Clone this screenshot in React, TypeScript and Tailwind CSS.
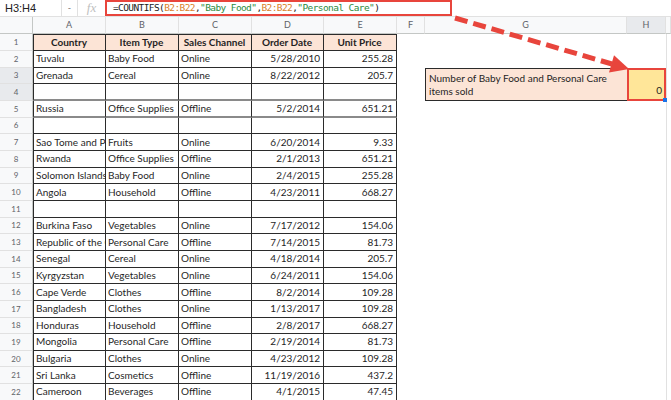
import React from "react";

type Row = [string, string, string, string, string] | null;

const ROWS: Row[] = [
  ["Country", "Item Type", "Sales Channel", "Order Date", "Unit Price"],
  ["Tuvalu", "Baby Food", "Online", "5/28/2010", "255.28"],
  ["Grenada", "Cereal", "Online", "8/22/2012", "205.7"],
  null,
  ["Russia", "Office Supplies", "Offline", "5/2/2014", "651.21"],
  null,
  ["Sao Tome and Principe", "Fruits", "Online", "6/20/2014", "9.33"],
  ["Rwanda", "Office Supplies", "Offline", "2/1/2013", "651.21"],
  ["Solomon Islands", "Baby Food", "Online", "2/4/2015", "255.28"],
  ["Angola", "Household", "Offline", "4/23/2011", "668.27"],
  null,
  ["Burkina Faso", "Vegetables", "Online", "7/17/2012", "154.06"],
  ["Republic of the Congo", "Personal Care", "Offline", "7/14/2015", "81.73"],
  ["Senegal", "Cereal", "Online", "4/18/2014", "205.7"],
  ["Kyrgyzstan", "Vegetables", "Online", "6/24/2011", "154.06"],
  ["Cape Verde", "Clothes", "Offline", "8/2/2014", "109.28"],
  ["Bangladesh", "Clothes", "Online", "1/13/2017", "109.28"],
  ["Honduras", "Household", "Offline", "2/8/2017", "668.27"],
  ["Mongolia", "Personal Care", "Offline", "2/19/2014", "81.73"],
  ["Bulgaria", "Clothes", "Online", "4/23/2012", "109.28"],
  ["Sri Lanka", "Cosmetics", "Offline", "11/19/2016", "437.2"],
  ["Cameroon", "Beverages", "Offline", "4/1/2015", "47.45"],
];

const LETTERS = ["A", "B", "C", "D", "E", "F", "G", "H", ""];

function TableCell({ row, col, value }: { row: number; col: number; value: string }) {
  const header = row === 1;
  const thick = row === 4 || row === 5;
  const cls = [
    "flex items-center overflow-hidden whitespace-nowrap pl-[2px] pr-[3px] text-[#1f1f1f] border-r border-r-[#2b2b2b]",
    thick ? "border-b-2 border-b-[#8a8a8a]" : "border-b border-b-[#2b2b2b]",
    col === 0 ? "border-l border-l-[#2b2b2b]" : "",
    header ? "border-t border-t-[#2b2b2b] bg-[#fce4d6] font-bold justify-center" : "",
    !header && col >= 3 ? "justify-end" : "",
  ].join(" ");
  return <div className={cls}>{value}</div>;
}

export default function App() {
  const cells: React.ReactNode[] = [];

  // column header row
  cells.push(
    <div key="corner" className="bg-[#f8f9fa] border-r border-b border-[#c4c7c5]" />
  );
  LETTERS.forEach((l, i) =>
    cells.push(
      <div
        key={"h" + i}
        className={
          "flex items-center justify-center text-[9px] text-[#5f6368] border-r border-b border-r-[#e1e1e1] border-b-[#c4c7c5] " +
          (l === "H" ? "bg-[#e8eaed]" : "bg-[#f8f9fa]")
        }
      >
        {l}
      </div>
    )
  );

  ROWS.forEach((data, idx) => {
    const r = idx + 1;
    const selected = r === 3 || r === 4;
    cells.push(
      <div
        key={"r" + r}
        className={
          "flex items-center justify-center text-[8px] text-[#5f6368] border-r border-b border-r-[#c4c7c5] border-b-[#e1e1e1] " +
          (selected ? "bg-[#e8eaed]" : "bg-[#f8f9fa]")
        }
      >
        {r}
      </div>
    );
    for (let c = 0; c < 5; c++) {
      cells.push(<TableCell key={`c${r}-${c}`} row={r} col={c} value={data ? data[c] : ""} />);
    }
    cells.push(<div key={"f" + r} />);
    if (r === 3) {
      cells.push(
        <div
          key="label"
          className="row-span-2 flex flex-col justify-end bg-[#fce4d6] border-l border-t border-b border-[#2b2b2b] px-[3px] pb-[2px] leading-[13px] text-[#1f1f1f]"
        >
          <span>Number of Baby Food and Personal Care</span>
          <span>items sold</span>
        </div>
      );
      cells.push(
        <div
          key="result"
          className="relative row-span-2 flex items-end justify-end bg-[#ffe699] border-2 border-[#e8453c] px-[2px] pb-[1px] text-[#1f1f1f]"
        >
          0
          <span className="absolute -bottom-[3px] -right-[3px] h-[4px] w-[4px] bg-[#1a73e8]" />
        </div>
      );
    } else if (r !== 4) {
      cells.push(<div key={"g" + r} />);
      cells.push(<div key={"hh" + r} />);
    }
    cells.push(<div key={"i" + r} className="border-l border-[#e1e1e1]" />);
  });

  return (
    <div className="relative h-[400px] w-[671px] overflow-hidden bg-white font-['Lato',sans-serif] text-[10px]">
      {/* formula bar */}
      <div className="flex h-[17px] items-stretch border-b border-[#e1e1e1] bg-white">
        <div className="flex w-[61px] items-center pl-[5px] font-['Liberation_Sans',sans-serif] text-[11px] text-[#222]">
          H3:H4
        </div>
        <div className="flex w-[16px] items-center justify-center border-l border-[#e1e1e1] text-[9px] text-[#777]">
          -
        </div>
        <div className="flex w-[28px] items-center justify-center border-l border-[#e1e1e1] font-['Liberation_Serif',serif] text-[13px] italic text-[#c0c0c0]">
          fx
        </div>
        <div className="flex w-[347px] items-center border-2 border-[#e8453c] pl-[6px] font-['DejaVu_Sans_Mono',monospace] text-[9.5px] tracking-[-0.6px] text-[#222]">
          <span>=COUNTIFS(</span>
          <span className="text-[#d9822b]">B2:B22</span>
          <span>,</span>
          <span className="text-[#2e8b3e]">"Baby Food"</span>
          <span>,</span>
          <span className="text-[#d9822b]">B2:B22</span>
          <span>,</span>
          <span className="text-[#2e8b3e]">"Personal Care"</span>
          <span>)</span>
        </div>
      </div>

      {/* sheet grid */}
      <div className="grid grid-cols-[33px_73px_73px_73px_72px_73px_28px_202px_39px_1fr] grid-rows-[16.5px_17.5px_repeat(21,16.67px)]">
        {cells}
      </div>

      {/* arrow */}
      <svg className="pointer-events-none absolute inset-0" width="671" height="400">
        <line x1="455" y1="18" x2="612" y2="64" stroke="#e8453c" strokeWidth="5" strokeDasharray="13 6" />
        <polygon points="629,69 609,72.5 614,55.3" fill="#e8453c" />
      </svg>
    </div>
  );
}
